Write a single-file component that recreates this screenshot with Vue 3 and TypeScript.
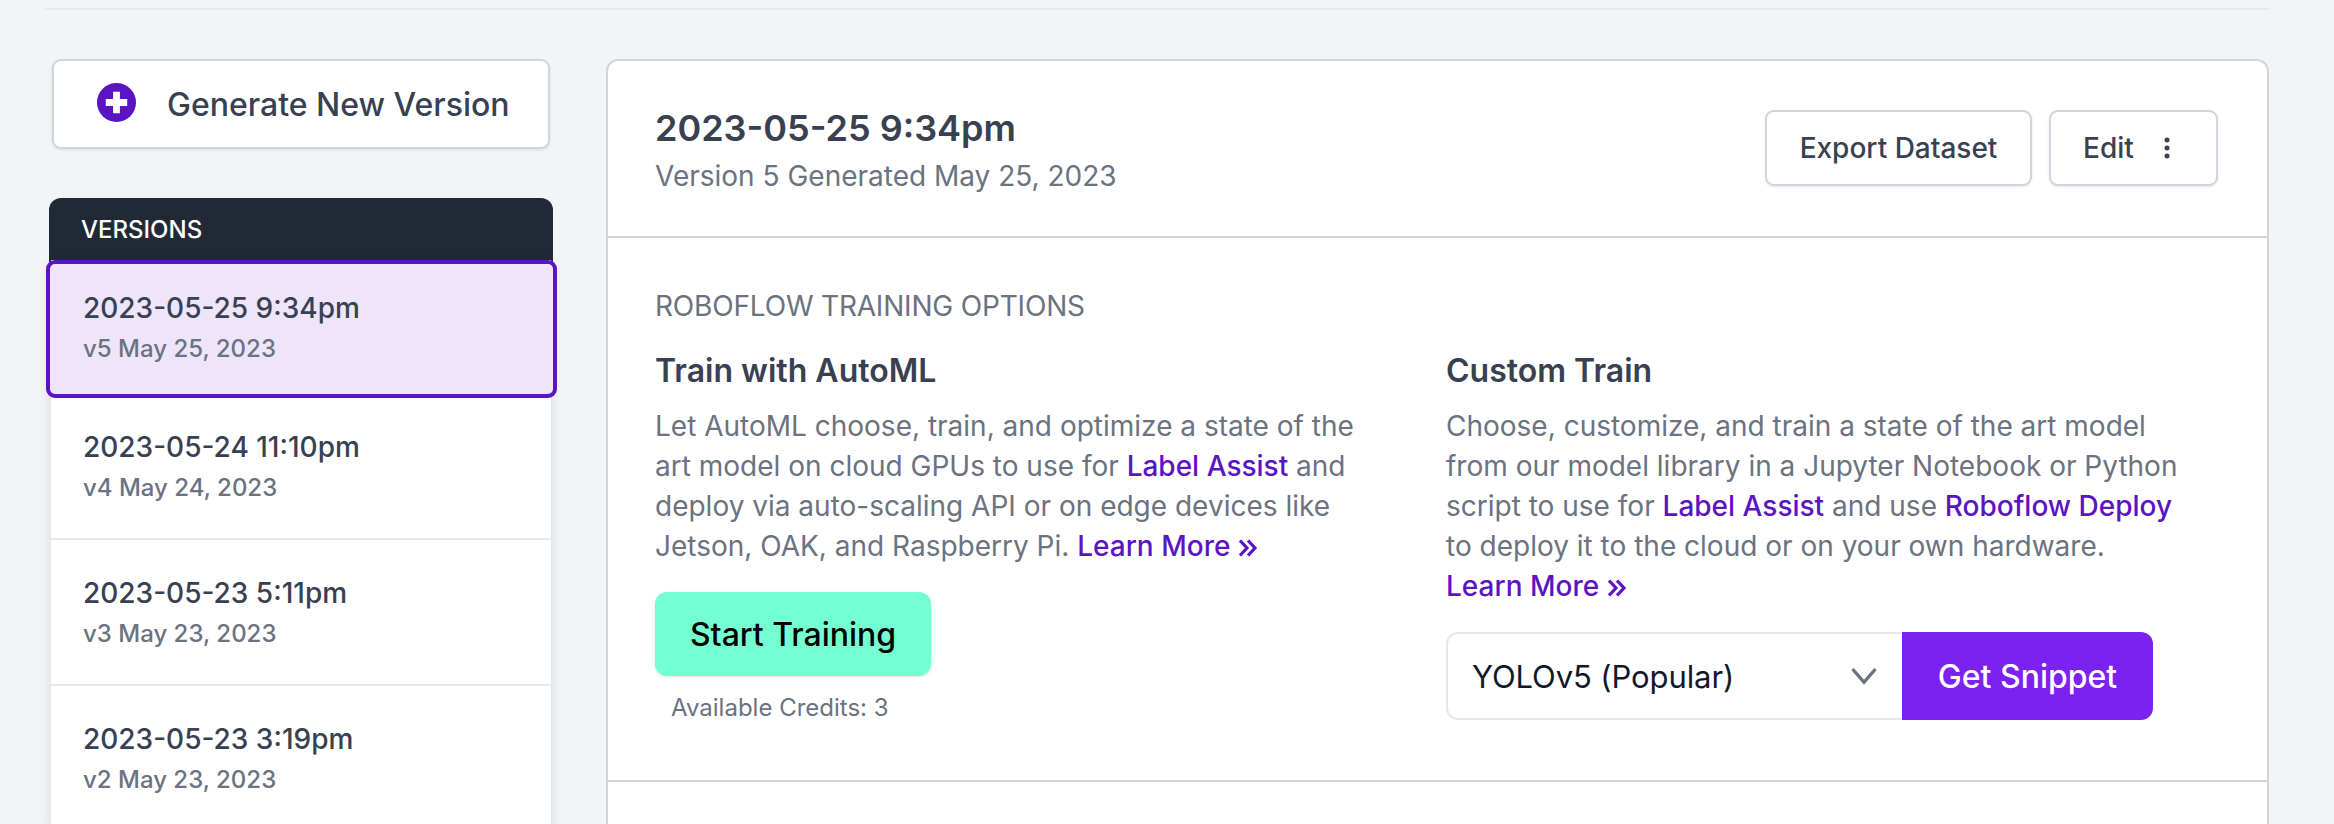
<template>
  <div class="page">
    <div class="top-rule"></div>
    <div class="content">
      <!-- sidebar -->
      <aside class="sidebar">
        <button class="generate-btn">
          <svg class="plus-icon" viewBox="0 0 40 40">
            <circle cx="20" cy="20" r="20" fill="#5b14c4" />
            <path d="M16.500 9h7v7.500h7.500v7h-7.500v7.500h-7v-7.500h-7.500v-7h7.500z" fill="#fff" />
          </svg>
          <span>Generate New Version</span>
        </button>

        <div class="versions-head">VERSIONS</div>
        <div class="versions-list">
          <div
            v-for="v in versions"
            :key="v.name"
            class="version-item"
            :class="{ selected: v.selected }"
          >
            <div class="version-name">{{ v.name }}</div>
            <div class="version-date">{{ v.date }}</div>
          </div>
        </div>
      </aside>

      <!-- main card -->
      <main class="card">
        <header class="card-head">
          <div>
            <h1>2023-05-25 9:34pm</h1>
            <p>Version 5 Generated May 25, 2023</p>
          </div>
          <div class="head-actions">
            <button class="outline-btn export-btn">Export Dataset</button>
            <button class="outline-btn edit-btn">
              Edit
              <svg class="dots" viewBox="0 0 6 24">
                <circle cx="3" cy="4" r="2.500" />
                <circle cx="3" cy="12" r="2.500" />
                <circle cx="3" cy="20" r="2.500" />
              </svg>
            </button>
          </div>
        </header>

        <section class="training">
          <div class="section-label">ROBOFLOW TRAINING OPTIONS</div>
          <div class="train-grid">
            <div>
              <h2>Train with AutoML</h2>
              <p class="desc">
                Let AutoML choose, train, and optimize a state of the art model on cloud GPUs to use for
                <a>Label Assist</a> and deploy via auto-scaling API or on edge devices like Jetson, OAK, and
                Raspberry Pi.
                <a class="learn">Learn More<svg class="double-chevron" viewBox="0 0 20 18">
                  <path d="M2 1.500 9 9l-7 7.500M10 1.500 17 9l-7 7.500" />
                </svg></a>
              </p>
              <button class="start-btn">Start Training</button>
              <div class="credits">Available Credits: 3</div>
            </div>
            <div>
              <h2>Custom Train</h2>
              <p class="desc">
                Choose, customize, and train a state of the art model from our model library in a Jupyter
                Notebook or Python script to use for <a>Label Assist</a> and use <a>Roboflow Deploy</a>
                to deploy it to the cloud or on your own hardware.
                <a class="learn">Learn More<svg class="double-chevron" viewBox="0 0 20 18">
                  <path d="M2 1.500 9 9l-7 7.500M10 1.500 17 9l-7 7.500" />
                </svg></a>
              </p>
              <div class="snippet-row">
                <div class="model-select">
                  <span>YOLOv5 (Popular)</span>
                  <svg class="chevron" viewBox="0 0 20 20">
                    <path d="M1.800 5 10 14.500 18.200 5" fill="none" stroke="#6b7280" stroke-width="2.400" />
                  </svg>
                </div>
                <button class="snippet-btn">Get Snippet</button>
              </div>
            </div>
          </div>
        </section>

        <div class="card-rest"></div>
      </main>
    </div>
  </div>
</template>

<script setup lang="ts">
interface Version {
  name: string
  date: string
  selected?: boolean
}

const versions: Version[] = [
  { name: '2023-05-25 9:34pm', date: 'v5 May 25, 2023', selected: true },
  { name: '2023-05-24 11:10pm', date: 'v4 May 24, 2023' },
  { name: '2023-05-23 5:11pm', date: 'v3 May 23, 2023' },
  { name: '2023-05-23 3:19pm', date: 'v2 May 23, 2023' }
]
</script>

<style>
html,
body {
  margin: 0;
  background: #f3f4f6;
}
</style>

<style scoped>
.page {
  height: 824px;
  overflow: hidden;
  background: #f3f4f6;
  font-family: Inter, "Liberation Sans", sans-serif;
  color: #374151;
}

.top-rule {
  height: 2px;
  margin: 8px 65px 0 45px;
  background: #e5e7eb;
}

.content {
  display: flex;
  align-items: flex-start;
  margin-top: 49px;
  padding-left: 49px;
}

.sidebar {
  width: 504px;
  flex: none;
}

.generate-btn {
  display: flex;
  align-items: center;
  gap: 31px;
  width: 498px;
  height: 90px;
  margin: 0 3px;
  padding: 0 0 0 43px;
  box-sizing: border-box;
  background: #fff;
  border: 2px solid #d1d5db;
  border-radius: 9px;
  box-shadow: 0 1px 3px rgba(0, 0, 0, 0.1);
  font: 500 32px Inter, sans-serif;
  color: #374151;
}

.plus-icon {
  width: 39px;
  height: 39px;
  flex: none;
  margin-top: -3px;
}

.versions-head {
  height: 64px;
  margin-top: 49px;
  padding-left: 32px;
  line-height: 63px;
  background: #212936;
  border-radius: 12px 12px 0 0;
  color: #fff;
  font-size: 24px;
  font-weight: 500;
}

.versions-list {
  margin: 0 2px;
  background: #fff;
  box-shadow: 0 4px 12px rgba(0, 0, 0, 0.12);
}

.version-item {
  height: 146px;
  box-sizing: border-box;
  padding: 33px 0 0 32px;
  border-bottom: 2px solid #e5e7eb;
}

.version-item.selected {
  position: relative;
  height: 138px;
  margin: -2px -6px 0 -5px;
  padding: 24px 0 0 33px;
  background: #eee5fb;
  border: 4px solid #5b14c4;
  border-radius: 9px;
}

.version-item.selected + .version-item {
  height: 142px;
  padding-top: 29px;
}

.version-name {
  font-size: 28px;
  line-height: 40px;
  font-weight: 500;
  color: #374151;
}

.version-date {
  margin-top: 3px;
  font-size: 24px;
  line-height: 36px;
  font-weight: 500;
  color: #6b7280;
}

.card {
  flex: 1;
  margin: 0 65px 0 53px;
  background: #fff;
  border: 2px solid #d1d5db;
  border-radius: 12px;
}

.card-head {
  display: flex;
  justify-content: space-between;
  align-items: flex-start;
  height: 177px;
  box-sizing: border-box;
  padding: 45px 49px 0 47px;
  border-bottom: 2px solid #d1d5db;
}

.card-head h1 {
  margin: 0;
  font-size: 36px;
  line-height: 44px;
  font-weight: 600;
  color: #374151;
}

.card-head p {
  margin: 6px 0 0;
  font-size: 28px;
  line-height: 40px;
  color: #6b7280;
}

.head-actions {
  display: flex;
  gap: 17px;
  margin-top: 4px;
}

.outline-btn {
  display: flex;
  align-items: center;
  height: 76px;
  box-sizing: border-box;
  background: #fff;
  border: 2px solid #d1d5db;
  border-radius: 9px;
  box-shadow: 0 1px 3px rgba(0, 0, 0, 0.1);
  font: 500 28px Inter, sans-serif;
  color: #374151;
}

.export-btn {
  width: 267px;
  justify-content: center;
}

.edit-btn {
  width: 169px;
  padding-left: 32px;
  gap: 30px;
}

.dots {
  width: 6px;
  height: 24px;
  fill: #374151;
}

.training {
  height: 544px;
  box-sizing: border-box;
  padding: 48px 49px 0 47px;
  border-bottom: 2px solid #d1d5db;
}

.section-label {
  font-size: 28px;
  line-height: 40px;
  letter-spacing: -0.18px;
  color: #6b7280;
}

.train-grid {
  display: grid;
  grid-template-columns: 730px 750px;
  gap: 61px;
  margin-top: 24px;
}

.train-grid h2 {
  margin: 0;
  font-size: 32px;
  line-height: 42px;
  font-weight: 600;
  color: #374151;
}

.desc {
  margin: 14px 0 0;
  font-size: 28px;
  line-height: 40px;
  color: #6b7280;
}

.desc a {
  color: #5b14c4;
  font-weight: 500;
  white-space: nowrap;
}

.double-chevron {
  width: 20px;
  height: 18px;
  margin-left: 8px;
  vertical-align: -1px;
  fill: none;
  stroke: #5b14c4;
  stroke-width: 3.200;
}

.start-btn {
  display: block;
  width: 276px;
  height: 84px;
  margin-top: 26px;
  background: #73ffd2;
  border: none;
  border-radius: 12px;
  box-shadow: 0 1px 3px rgba(0, 0, 0, 0.1);
  font: 500 32px Inter, sans-serif;
  color: #000;
}

.credits {
  margin: 16px 0 0 16px;
  font-size: 24px;
  line-height: 32px;
  color: #6b7280;
}

.snippet-row {
  display: flex;
  margin-top: 26px;
}

.model-select {
  display: flex;
  align-items: center;
  justify-content: space-between;
  width: 456px;
  height: 88px;
  box-sizing: border-box;
  padding: 0 24px;
  background: #fff;
  border: 2px solid #e5e7eb;
  border-right: none;
  border-radius: 12px 0 0 12px;
  font-size: 31px;
  letter-spacing: -0.1px;
  color: #111827;
}

.chevron {
  width: 28px;
  height: 28px;
}

.snippet-btn {
  width: 251px;
  height: 88px;
  background: #7c22f0;
  border: none;
  border-radius: 0 12px 12px 0;
  font: 500 32px Inter, sans-serif;
  color: #fff;
}

.card-rest {
  height: 200px;
}
</style>
